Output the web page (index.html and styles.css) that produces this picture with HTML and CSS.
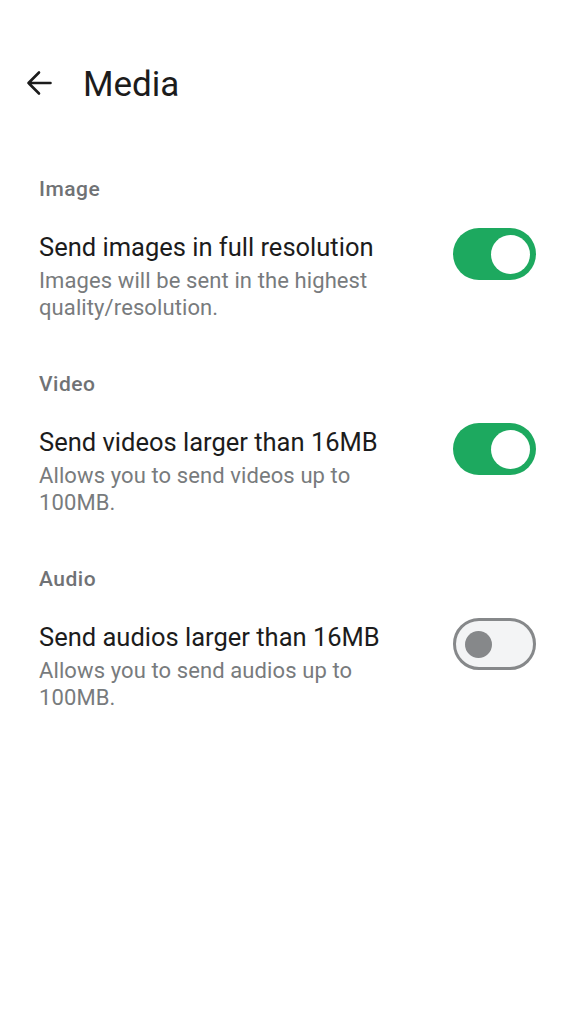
FILE: index.html
```html
<!DOCTYPE html>
<html lang="en">
<head>
<meta charset="utf-8">
<title>Media</title>
<link rel="stylesheet" href="styles.css">
</head>
<body>
<header class="appbar">
  <button class="back" aria-label="Back">
    <svg viewBox="0 0 26 26" width="26" height="26"><path d="M24.5 13H2.5M13 2.5L2.5 13L13 23.5" fill="none" stroke="#1c1c1c" stroke-width="2.6" stroke-linecap="round" stroke-linejoin="round"/></svg>
  </button>
  <h1 class="title">Media</h1>
</header>
<main class="settings">
  <section class="group">
    <h2 class="group-title">Image</h2>
    <div class="row">
      <div class="text">
        <div class="label">Send images in full resolution</div>
        <div class="desc">Images will be sent in the highest quality/resolution.</div>
      </div>
      <span class="switch on"><span class="thumb"></span></span>
    </div>
  </section>
  <section class="group">
    <h2 class="group-title">Video</h2>
    <div class="row">
      <div class="text">
        <div class="label">Send videos larger than 16MB</div>
        <div class="desc">Allows you to send videos up to 100MB.</div>
      </div>
      <span class="switch on"><span class="thumb"></span></span>
    </div>
  </section>
  <section class="group">
    <h2 class="group-title">Audio</h2>
    <div class="row">
      <div class="text">
        <div class="label">Send audios larger than 16MB</div>
        <div class="desc">Allows you to send audios up to 100MB.</div>
      </div>
      <span class="switch off"><span class="thumb"></span></span>
    </div>
  </section>
</main>
</body>
</html>
```
FILE: styles.css
```css
* { box-sizing: border-box; }
html, body { margin: 0; padding: 0; background: #fff; }
body { font-family: Roboto, "Noto Sans", sans-serif; color: #1c1c1c; width: 576px; height: 1024px; overflow: hidden; }

.appbar { display: flex; align-items: flex-start; padding: 65px 0 0 26px; }
.back { border: 0; background: none; padding: 0; width: 26px; height: 26px; display: flex; margin-top: 5px; }
.title { margin: 0 0 0 31px; font-size: 35px; line-height: 40px; font-weight: 400; color: #1c1c1c; }

.settings { padding: 69px 40px 0 39px; }
.group + .group { margin-top: 48px; }
.group-title { margin: 0; font-size: 21px; font-weight: 500; color: #707275; line-height: 30px; letter-spacing: 0.5px; }
.row { display: flex; align-items: flex-start; justify-content: space-between; margin-top: 27px; }
.text { width: 360px; }
.label { font-size: 25.5px; line-height: 32px; color: #1c1c1c; }
.desc { margin-top: 4px; font-size: 22px; line-height: 27px; color: #787b7d; letter-spacing: 0.1px; }

.switch { flex: none; width: 83px; height: 52px; border-radius: 26px; position: relative; margin-top: -3px; }
.switch.on { background: #1da95f; }
.switch.off { background: #f3f4f5; border: 3px solid #86888a; }
.thumb { position: absolute; border-radius: 50%; }
.switch.on .thumb { width: 39px; height: 39px; right: 6px; top: 6.5px; background: #fff; }
.switch.off .thumb { width: 27px; height: 27px; left: 9px; top: 9.5px; background: #86888a; }
```
